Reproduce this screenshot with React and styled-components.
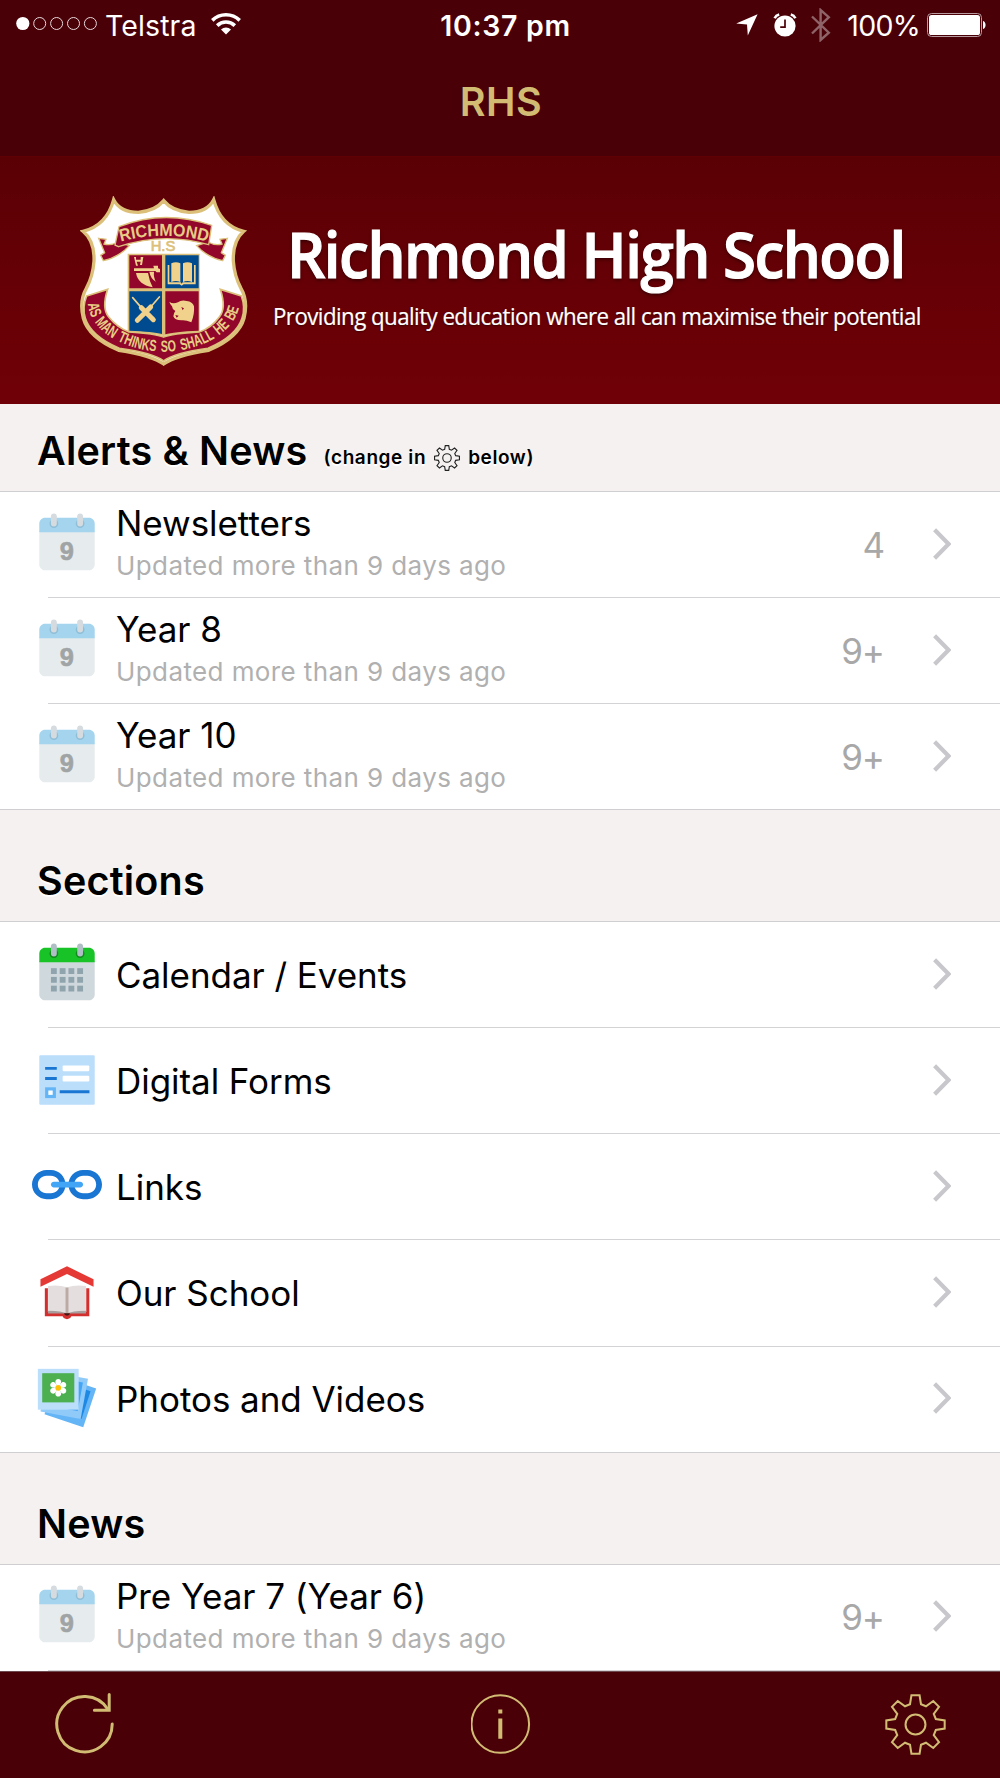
import React from 'react';
import styled, { createGlobalStyle } from 'styled-components';
import { FcLink, FcStackOfPhotos } from 'react-icons/fc';

const GOLD = '#d2bc74';
const MAROON = '#4a0007';

const GlobalStyle = createGlobalStyle`
	* {
		box-sizing: border-box;
	}

	body {
		margin: 0;
		background: #fff;
		font-family: Inter, 'Liberation Sans', sans-serif;
	}
`;

const Screen = styled.div`
	width: 1000px;
	height: 1778px;
	display: flex;
	flex-direction: column;
	overflow: hidden;
	background: #fff;
	color: #000;
	white-space: nowrap;
`;

const TopBar = styled.header`
	flex: none;
	height: 156px;
	background: ${MAROON};
`;

const StatusBar = styled.div`
	height: 51px;
	display: grid;
	grid-template-columns: 1fr auto 1fr;
	align-items: center;
	padding: 0 14px 0 16px;
	color: #fff;
	font-size: 28.5px;
	line-height: 51px;
`;

const StatusLeft = styled.div`
	display: flex;
	align-items: center;

	& > svg {
		margin-bottom: 3px;
	}
`;

const Carrier = styled.span`
	margin: 0 14px 0 7px;
	letter-spacing: 0.1px;
`;

const Clock = styled.span`
	font-weight: 600;
	letter-spacing: 0.7px;
	padding-left: 9px;
`;

const StatusRight = styled.div`
	display: flex;
	align-items: center;
	justify-content: flex-end;

	& > svg {
		flex: none;
		margin-bottom: 1px;
	}
`;

const Percent = styled.span`
	margin: 0 7px 0 16px;
	letter-spacing: -0.7px;
`;

const Title = styled.h1`
	margin: 0;
	height: 103px;
	line-height: 103px;
	text-align: center;
	font-size: 39.5px;
	font-weight: 600;
	letter-spacing: 0.6px;
	padding-left: 2px;
	color: ${GOLD};
`;

const Banner = styled.div`
	flex: none;
	height: 248px;
	display: flex;
	padding: 39px 0 0 80px;
	background: linear-gradient(#5a0005, #700007);
	border-top: 1px solid #5f0005;

	& > svg {
		flex: none;
	}
`;

const BannerText = styled.div`
	padding: 18px 0 0 23px;
	font-family: 'Open Sans', 'Noto Sans', sans-serif;
	color: #fff;
`;

const SchoolName = styled.div`
	margin-left: 14px;
	font-size: 64px;
	font-weight: 600;
	line-height: 80px;
	letter-spacing: -1.6px;
	-webkit-text-stroke: 1.2px #fff;
	transform: scaleX(0.938);
	transform-origin: 0 0;
	text-shadow: 0 2px 4px rgba(0, 0, 0, 0.5);
`;

const Motto = styled.div`
	margin-top: 2px;
	font-size: 24px;
	line-height: 40px;
	letter-spacing: -0.6px;
	-webkit-text-stroke: 0.2px #fff;
	transform: scaleX(0.929);
	transform-origin: 0 0;
	text-shadow: 0 1px 2px rgba(0, 0, 0, 0.5);
`;

const Content = styled.main`
	height: 1267px;
	overflow: hidden;
`;

const SectionHead = styled.div`
	height: ${({ $first }) => ($first ? '87px' : '111.9px')};
	display: flex;
	align-items: flex-end;
	padding: 0 37px 16px;
	background: #f5f1f1;
	border-top: ${({ $first }) => ($first ? 'none' : '1px solid #cfcfd2')};
	text-shadow: 0 2px 1px #fff;
`;

const Heading = styled.h2`
	margin: 0;
	font-size: 39.5px;
	font-weight: 600;
	line-height: 48px;
	letter-spacing: 0.2px;
`;

const Hint = styled.span`
	display: flex;
	align-items: center;
	margin-left: 16px;
	font-size: 19px;
	font-weight: 600;
	line-height: 34px;
	letter-spacing: 0.6px;

	& > svg {
		margin: 0 8px;
	}
`;

const List = styled.div`
	border-top: 1px solid #cfcfd2;
`;

const Row = styled.div`
	height: 106.1px;
	margin-left: 48px;
	padding-right: 49px;
	display: flex;
	align-items: center;
	border-bottom: 1px solid #d3d3d5;

	&:last-child {
		height: ${({ $more }) => ($more ? '106.1px' : '105.1px')};
		border-bottom-width: ${({ $more }) => ($more ? '1px' : '0')};
	}
`;

const RowIcon = styled.div`
	flex: none;
	width: 70px;
	height: 70px;
	margin: 0 14.5px 2px -16.5px;

	& > svg {
		display: block;
		width: 70px;
		height: 70px;
	}
`;

const RowText = styled.div`
	flex: 1;
	padding-bottom: ${({ $single }) => ($single ? '0' : '4px')};
`;

const RowTitle = styled.div`
	font-size: 35px;
	line-height: 42px;
	letter-spacing: -0.05px;
`;

const RowSub = styled.div`
	margin-top: 5px;
	font-size: 26px;
	line-height: 34px;
	letter-spacing: 0.4px;
	color: #b0b0b0;
`;

const Count = styled.span`
	margin-right: 49px;
	font-size: 35px;
	letter-spacing: -1px;
	color: #a8a8a8;
`;

const TabBar = styled.footer`
	flex: none;
	height: 107px;
	display: flex;
	align-items: center;
	justify-content: space-between;
	padding: 0 54.5px 2px 53px;
	background: ${MAROON};
	border-top: 1px solid #6d4a4f;
`;

const SignalDots = () => (
	<svg width="82" height="16" viewBox="0 0 82 16">
		{[0, 1, 2, 3, 4].map((i) => (
			<circle
				key={i}
				cx={6.8 + i * 16.9}
				cy="7.5"
				r={i === 0 ? 6.6 : 6}
				fill={i === 0 ? '#fff' : 'none'}
				stroke={i === 0 ? 'none' : '#e6d8da'}
				strokeWidth="1"
			/>
		))}
	</svg>
);

const Wifi = () => (
	<svg width="30" height="22" viewBox="0 0 30 22">
		<g fill="none" stroke="#fff" strokeWidth="3.6">
			<path d="M1.3 7.4a19.6 19.6 0 0 1 27.4 0" />
			<path d="M6.2 12.6a12.6 12.6 0 0 1 17.6 0" />
		</g>
		<path d="M15 21.6l-5-5a7.2 7.2 0 0 1 10 0z" fill="#fff" />
	</svg>
);

const LocationArrow = () => (
	<svg width="22" height="22" viewBox="0 0 22 22">
		<path d="M21.6 0.3L11.8 21.6 11 10.6 0.2 9.6z" fill="#fff" />
	</svg>
);

const Alarm = () => (
	<svg width="24" height="24" viewBox="0 0 24 24" style={{ marginLeft: 15 }}>
		<circle cx="12" cy="13" r="10.6" fill="#fff" />
		<path d="M1.6 5.2A7 7 0 0 1 6.2 1.4M22.4 5.2A7 7 0 0 0 17.8 1.4" fill="none" stroke="#fff" strokeWidth="2.6" />
		<path d="M12 6.4v7.8H7.2" fill="none" stroke={MAROON} strokeWidth="1.7" />
	</svg>
);

const Bluetooth = () => (
	<svg width="20" height="34" viewBox="0 0 20 34" style={{ marginLeft: 14 }}>
		<path d="M1 8.5l16.8 16.2L9.6 32V2l8.2 7.2L1 25.5" fill="none" stroke="#8f6468" strokeWidth="2.4" />
	</svg>
);

const Battery = () => (
	<svg width="59" height="24" viewBox="0 0 59 24">
		<rect x="0.5" y="0.5" width="54" height="23" rx="4" fill="none" stroke="#b79aa0" strokeWidth="1" />
		<rect x="2" y="2" width="51" height="20" rx="2.6" fill="#fff" />
		<path d="M56 8c3.4 1 3.4 7 0 8z" fill="#fff" />
	</svg>
);

const Chevron = () => (
	<svg width="18" height="32" viewBox="0 0 18 32" style={{ marginBottom: 2 }}>
		<path d="M1.6 1.8L15.6 16 1.6 30.2" fill="none" stroke="#c7c7cc" strokeWidth="4.2" />
	</svg>
);

// eight teeth, each one is the same four points turned by 45deg
const gearPoints = Array.from({ length: 8 })
	.flatMap((_, i) => {
		const a = (i * Math.PI) / 4;
		return [[-5.4, -20], [-4, -28.7], [4, -28.7], [5.4, -20]].map(([x, y]) => {
			const px = x * Math.cos(a) - y * Math.sin(a);
			const py = x * Math.sin(a) + y * Math.cos(a);
			return `${px.toFixed(2)},${py.toFixed(2)}`;
		});
	})
	.join(' ');

const Gear = ({ size, color, stroke }) => (
	<svg width={size} height={size} viewBox="-30 -30 60 60">
		<g fill="none" stroke={color} strokeWidth={stroke}>
			<polygon points={gearPoints} />
			<circle r="9.8" />
		</g>
	</svg>
);

const Refresh = () => (
	<svg width="64" height="64" viewBox="0 0 64 64">
		<g fill="none" stroke={GOLD} strokeWidth="3" strokeLinecap="round">
			<path d="M59.2 32A27.7 27.7 0 1 1 54.8 17.2" />
			<path d="M56.2 2.4V18.2H41.4" />
		</g>
	</svg>
);

const Info = () => (
	<svg width="60" height="60" viewBox="0.7 0 60 60">
		<circle cx="30" cy="30" r="28.8" fill="none" stroke={GOLD} strokeWidth="2" />
		<path d="M28 15.4h4v4h-4zM28 24.4h4v20.4h-4z" fill={GOLD} />
	</svg>
);

const CalendarBase = ({ head, hole, body, ring, children }) => (
	<svg viewBox="0 0 48 48">
		<path d="M5 38V15h38v23c0 2.2-1.8 4-4 4H9c-2.2 0-4-1.8-4-4z" fill={body} />
		<path d="M43 10v6H5v-6c0-2.2 1.8-4 4-4h30c2.2 0 4 1.8 4 4z" fill={head} />
		<circle cx="33" cy="10" r="3" fill={hole} />
		<circle cx="15" cy="10" r="3" fill={hole} />
		<rect x="31" y="3" width="4" height="9" rx="2" fill={ring} />
		<rect x="13" y="3" width="4" height="9" rx="2" fill={ring} />
		{children}
	</svg>
);

const NineDays = () => (
	<CalendarBase head="#a4d4ee" hole="#8fbfd8" body="#e6ebed" ring="#d5dbdf">
		<text
			x="23.9"
			y="35"
			textAnchor="middle"
			fontFamily="'Liberation Sans', sans-serif"
			fontWeight="700"
			fontSize="17.4"
			fill="#a0a4a5"
			stroke="#a0a4a5"
			strokeWidth="0.4"
		>
			9
		</text>
	</CalendarBase>
);

const GreenCalendar = () => (
	<CalendarBase head="#17c327" hole="#128a1d" body="#cfd8dc" ring="#b0bec5">
		{[20, 26, 32].map((y) =>
			[13, 19, 25, 31].map((x) => <rect key={`${x}-${y}`} x={x} y={y} width="4" height="4" fill="#90a4ae" />)
		)}
	</CalendarBase>
);

const Forms = () => (
	<svg viewBox="0 0 48 48">
		<rect x="5" y="7" width="38" height="34" rx="0.8" fill="#bbdefb" />
		<path d="M9 15h8v2H9zM9 22h8v2H9zM19 31h20.4v2H19z" fill="#1976d2" />
		<rect x="21" y="14" width="18.3" height="4" rx="0.8" fill="#fff" />
		<rect x="21" y="21" width="18.3" height="4" rx="0.8" fill="#fff" />
		<rect x="9" y="29" width="7.4" height="7.4" fill="#64b5f6" />
		<rect x="11.2" y="31.2" width="3" height="3" fill="#fff" />
	</svg>
);

const School = () => (
	<svg viewBox="0 0 48 48">
		<path d="M24 6.4l18.2 8.8v5.2L24 11.7 5.8 20.4v-5.2z" fill="#e53935" />
		<path d="M8.8 21.5h30.5v19.2H27c-.5 1.3-1.6 1.9-3 1.9s-2.5-.6-3-1.9H8.8z" fill="#d32f2f" />
		<path d="M10.9 21.2h26.3v16.5H10.9z" fill="#fff" />
		<path d="M11 36.5h26v2.2H11z" fill="#a89c9c" />
		<path d="M11 19.9q7-1.2 13 .9q6-2.1 13-.9v17q-7-.6-13 1.6q-6-2.2-13-1.6z" fill="#e4dfde" />
		<path d="M23 21h2v17.5h-2z" fill="#bcaaa4" />
		<path d="M22 38.6h4q-.2 1.7-2 1.7t-2-1.7z" fill="#3e1a17" />
	</svg>
);

const Crest = () => (
	<svg width="170" height="170" viewBox="60 45 510 510">
		<defs>
			<path id="ribbonLine" d="M182 182Q312 146 446 183" />
			<path id="mottoLine" d="M84 368C92 462 215 512 311 512C407 512 530 462 540 364" />
		</defs>
		<path
			d="M161 56Q181 94 235 94Q286 90 311 59Q336 90 387 94Q441 94 461 56Q482 134 551 151Q518 180 520 240Q523 285 543 322Q565 360 552 412Q536 470 446 508Q345 524 311 549Q277 524 176 508Q86 470 70 412Q57 360 79 322Q99 285 102 240Q104 180 69 151Q140 134 161 56Z"
			fill="#fff"
			stroke="#dcc07a"
			strokeWidth="10"
		/>
		<path
			d="M80 345L143 325Q124 382 146 408Q172 440 207 453Q285 458 311 468Q337 458 418 453Q455 440 478 408Q500 382 481 325L544 345Q557 380 546 412Q529 466 444 502Q342 516 311 540Q280 516 178 502Q93 466 76 412Q66 380 80 345Z"
			fill="#92062b"
			stroke="#dcc07a"
			strokeWidth="5"
		/>
		<path d="M203 218h216v235Q337 458 311 465Q285 458 203 453z" fill="#dcc07a" />
		<path d="M208 223h98v99h-98zM316 331h100v118Q340 452 316 460z" fill="#92062b" />
		<path d="M316 223h100v99H316zM208 331h98v128Q280 452 208 449z" fill="#004a8f" />

		<g stroke="#dcc07a" strokeWidth="4" fill="#92062b">
			<path d="M116 172l22 3-6 14q20 6 42-6l34 11-14 14q-30 24-64 31l-8-16 12-8z" />
			<path d="M502 172l-22 3 6 14q-20 6-42-6l-34 11 14 14q30 24 64 31l8-16-12-8z" />
			<path d="M177 137Q312 84 455 133L446 191Q312 152 176 197L165 192Z" />
		</g>
		<g fontFamily="'Liberation Sans', sans-serif" fill="#e6cc84">
			<text fontSize="52" fontWeight="700">
				<textPath href="#ribbonLine" textLength="264" lengthAdjust="spacingAndGlyphs">
					RICHMOND
				</textPath>
			</text>
			<text x="272" y="210" fontSize="42" textLength="74" lengthAdjust="spacingAndGlyphs" fill="#dcc07a" stroke="#dcc07a" strokeWidth="2">
				H.S
			</text>
			<text fontSize="48" fontWeight="700" wordSpacing="8">
				<textPath href="#mottoLine" textLength="572" lengthAdjust="spacingAndGlyphs">
					AS MAN THINKS SO SHALL HE BE
				</textPath>
			</text>
		</g>

		{/* sword */}
		<g fill="#f0d28c">
			<path d="M228 276h36q4 24 14 43q-44-8-50-43z" />
			<path d="M268 272h14q-2 18 6 30q-16-8-20-30z" />
			<path d="M222 262h60l-2-8h14v8l6 2v10h-10l-4-4h-64z" />
			<path d="M222 228h6v8h14v-8h8l-4 24h-6l2-10h-12l4 12h-6z" />
		</g>
		{/* book */}
		<g fill="#f0d28c">
			<path d="M334 247q14-6 27 0v56q-13-6-27 0zM369 247q14-6 27 0v56q-14-6-27 0z" />
			<path d="M323 252h5v52h34l3 4 3-4h34v-52h5v58h-36l-6 4-6-4h-36z" />
		</g>
		{/* crossed bats */}
		<g stroke="#f0d28c" strokeLinecap="round">
			<path d="M218 350L244 380M298 348L272 378" strokeWidth="5" />
			<path d="M244 380L280 416M272 378L232 418" strokeWidth="15" />
		</g>
		{/* bull */}
		<path
			d="M328 362q10 8 26 2q10-8 26-4q18 2 22 16q2 24-8 48q-18-8-30-6q-20 0-24-12q2-12 6-16q-10-6-10-14q-6-6-8-14z"
			fill="#f0d28c"
		/>
		<path d="M364 378l8 4-4 6zM346 402l10 2-6 6z" fill="#92062b" />
	</svg>
);

const SECTIONS = [
	{
		title: 'Alerts & News',
		hint: true,
		rows: [
			{ title: 'Newsletters', icon: NineDays, count: '4' },
			{ title: 'Year 8', icon: NineDays, count: '9+' },
			{ title: 'Year 10', icon: NineDays, count: '9+' },
		],
	},
	{
		title: 'Sections',
		rows: [
			{ title: 'Calendar / Events', icon: GreenCalendar },
			{ title: 'Digital Forms', icon: Forms },
			{ title: 'Links', icon: FcLink },
			{ title: 'Our School', icon: School },
			{ title: 'Photos and Videos', icon: FcStackOfPhotos },
		],
	},
	{
		title: 'News',
		more: true,
		rows: [{ title: 'Pre Year 7 (Year 6)', icon: NineDays, count: '9+' }],
	},
];

const App = () => {
	return (
		<Screen>
			<GlobalStyle />
			<TopBar>
				<StatusBar>
					<StatusLeft>
						<SignalDots />
						<Carrier>Telstra</Carrier>
						<Wifi />
					</StatusLeft>
					<Clock>10:37 pm</Clock>
					<StatusRight>
						<LocationArrow />
						<Alarm />
						<Bluetooth />
						<Percent>100%</Percent>
						<Battery />
					</StatusRight>
				</StatusBar>
				<Title>RHS</Title>
			</TopBar>

			<Banner>
				<Crest />
				<BannerText>
					<SchoolName>Richmond High School</SchoolName>
					<Motto>Providing quality education where all can maximise their potential</Motto>
				</BannerText>
			</Banner>

			<Content>
				{SECTIONS.map((section, i) => (
					<section key={section.title}>
						<SectionHead $first={i === 0}>
							<Heading>{section.title}</Heading>
							{section.hint && (
								<Hint>
									(change in
									<Gear size={26} color="#222" stroke={2.6} />
									below)
								</Hint>
							)}
						</SectionHead>
						<List>
							{section.rows.map(({ title, icon: Icon, count }) => (
								<Row key={title} $more={section.more}>
									<RowIcon>
										<Icon />
									</RowIcon>
									<RowText $single={!count}>
										<RowTitle>{title}</RowTitle>
										{count && <RowSub>Updated more than 9 days ago</RowSub>}
									</RowText>
									{count && <Count>{count}</Count>}
									<Chevron />
								</Row>
							))}
						</List>
					</section>
				))}
			</Content>

			<TabBar>
				<Refresh />
				<Info />
				<Gear size={61} color={GOLD} stroke={2} />
			</TabBar>
		</Screen>
	);
};

export default App;
